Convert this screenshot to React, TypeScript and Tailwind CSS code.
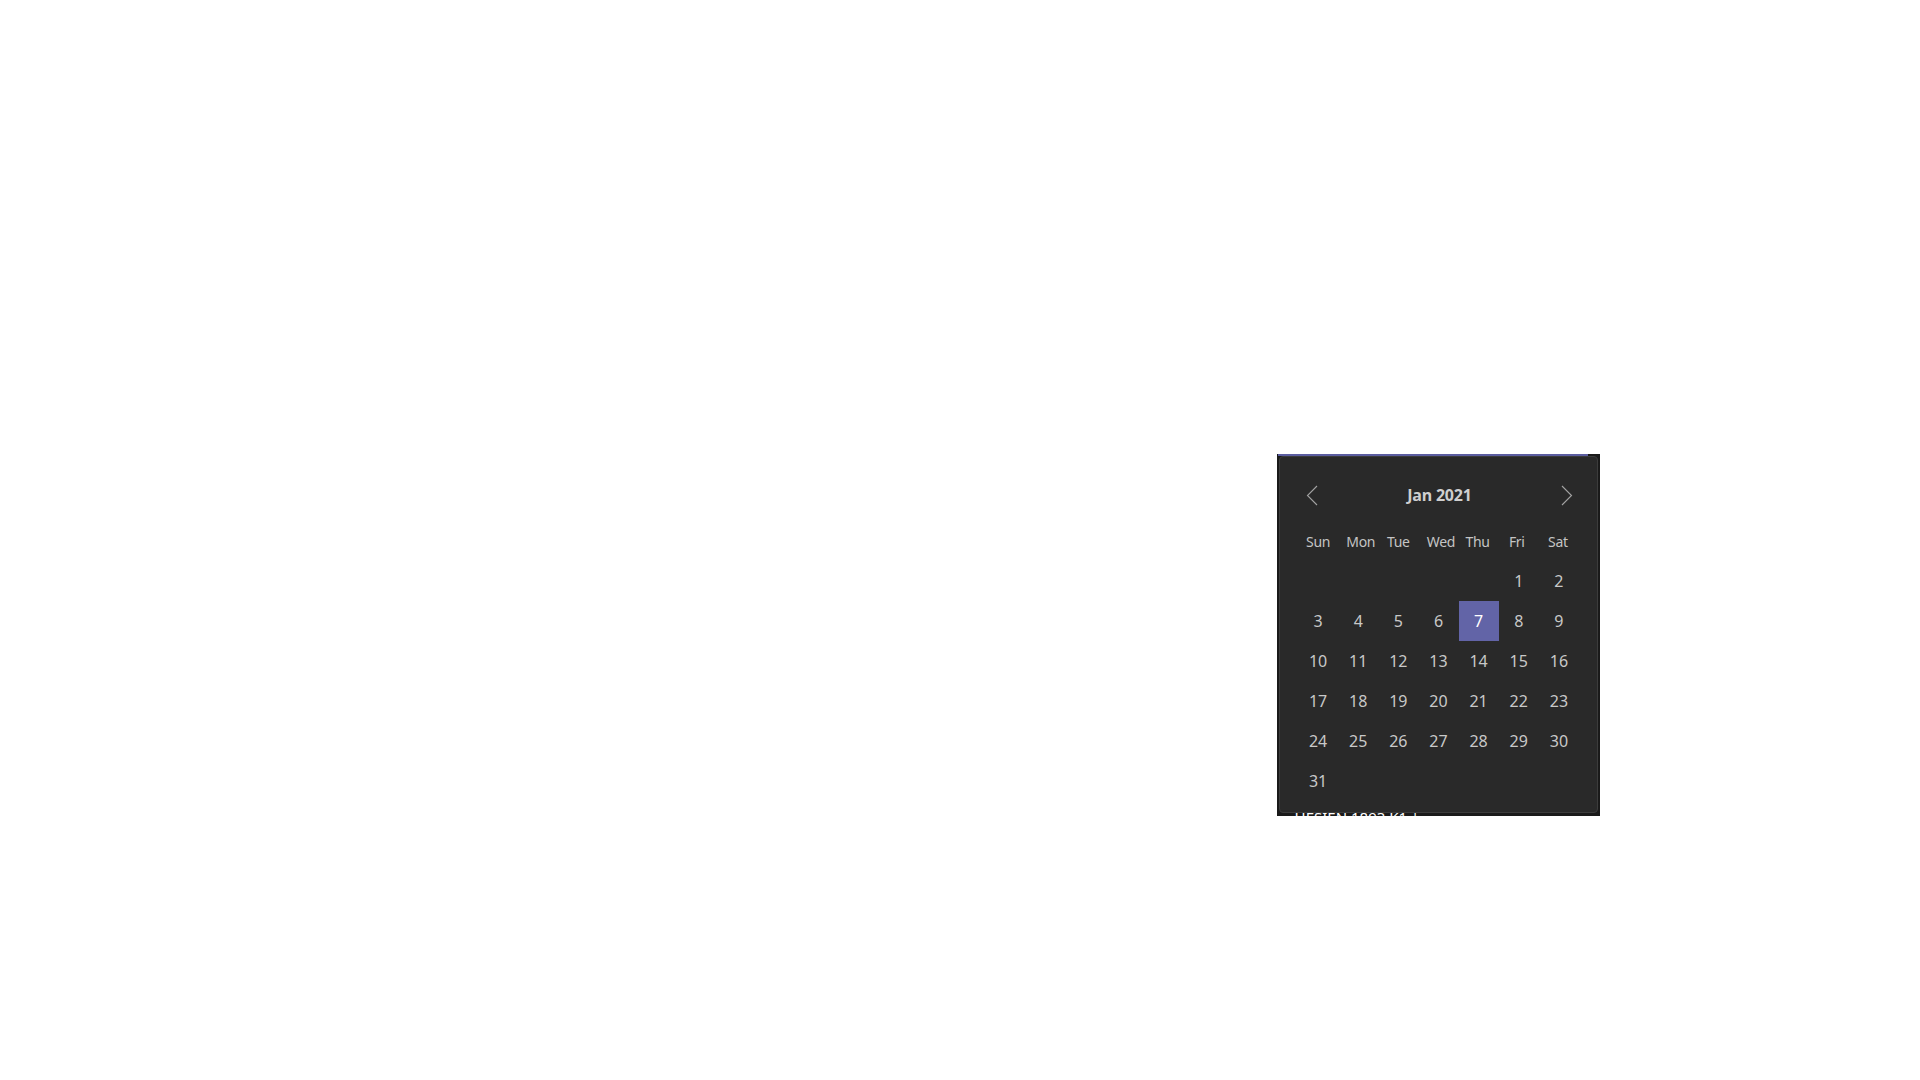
import React from "react";

const weekdays = [
  { label: "Sun", cls: "" },
  { label: "Mon", cls: "pl-[5px]" },
  { label: "Tue", cls: "" },
  { label: "Wed", cls: "pl-[5px]" },
  { label: "Thu", cls: "pr-[2px]" },
  { label: "Fri", cls: "pr-[4px]" },
  { label: "Sat", cls: "pr-[2px]" },
];

// Jan 2021 starts on a Friday
const cells: (number | null)[] = [
  ...Array(5).fill(null),
  ...Array.from({ length: 31 }, (_, i) => i + 1),
];

function Chevron({ dir }: { dir: "left" | "right" }) {
  return (
    <svg width="12" height="21" viewBox="0 0 12 21" fill="none">
      <path
        d={dir === "left" ? "M11 1 L1.5 10.5 L11 20" : "M1 1 L10.5 10.5 L1 20"}
        stroke="#a3a3a3"
        strokeWidth="1.1"
      />
    </svg>
  );
}

export default function App() {
  const selected = 7;
  return (
    <div className="w-[1920px] h-[1080px] bg-white pl-[1277px] pt-[454px] font-['Noto_Sans','Open_Sans',sans-serif]">
      <div className="w-[323px] bg-[#1a1a1a]">
        {/* top accent */}
        <div className="flex h-[2px]">
          <div className="ml-[1px] w-[310px] bg-[#5b5da0]" />
        </div>
        <div className="mx-[2px] rounded-[4px] border border-[#3c3c3c] bg-[#292929] px-[18px] pt-[18px] pb-[11px]">
          <div className="-mr-[2px] flex h-[40px] items-center justify-between">
            <button className="flex h-[28px] w-[28px] items-center justify-center">
              <Chevron dir="left" />
            </button>
            <div className="text-[16px] font-bold text-[#cfcfcf] tracking-[-0.2px]">Jan 2021</div>
            <button className="flex h-[28px] w-[28px] items-center justify-center">
              <Chevron dir="right" />
            </button>
          </div>
          <div className="mt-[12px] grid grid-cols-7 h-[28px] items-center">
            {weekdays.map((w) => (
              <div key={w.label} className={`text-center text-[14px] tracking-[-0.3px] text-[#c4c4c4] ${w.cls}`}>
                {w.label}
              </div>
            ))}
          </div>
          <div className="mt-[6px] grid grid-cols-7">
            {cells.map((d, i) => (
              <div
                key={i}
                className={
                  d === selected
                    ? "flex h-[40px] items-center justify-center bg-[#6264a7] text-[16px] text-white"
                    : "flex h-[40px] items-center justify-center text-[16px] text-[#c8c8c8]"
                }
              >
                {d ?? ""}
              </div>
            ))}
          </div>
        </div>
        <div className="h-[3px] overflow-hidden pl-[9px]">
          <div className="text-[15px] leading-[9px] text-white whitespace-nowrap">
            ‹ HESIEN 1893 K1 |
          </div>
        </div>
      </div>
    </div>
  );
}
